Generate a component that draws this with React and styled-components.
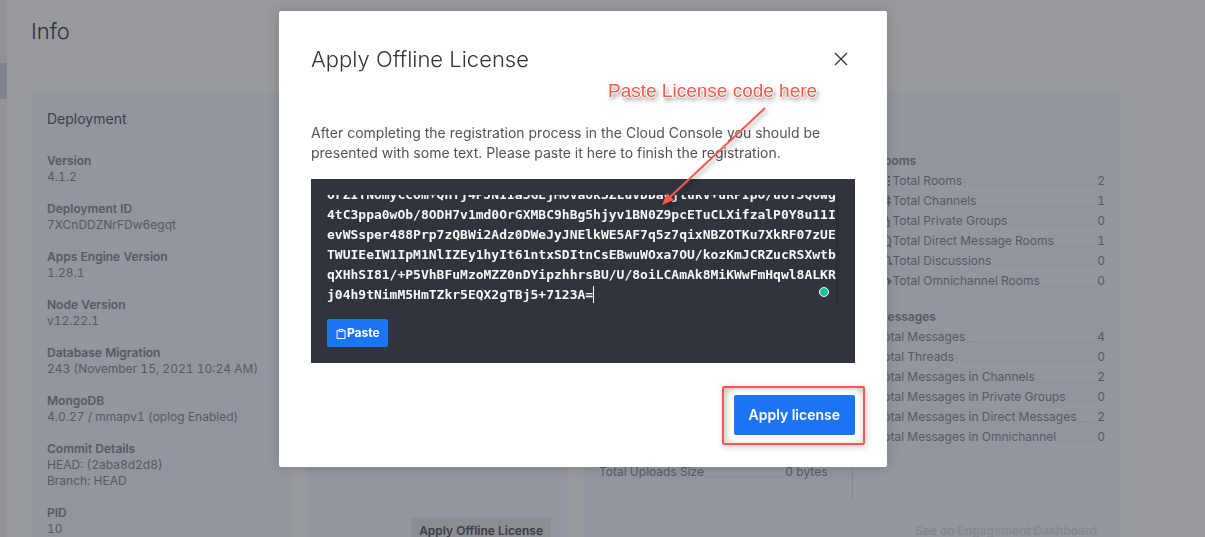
import React, { useLayoutEffect, useRef } from "react";
import styled, { createGlobalStyle } from "styled-components";

const GlobalStyle = createGlobalStyle`
  *, *::before, *::after { box-sizing: border-box; }
  body {
    margin: 0;
    overflow: hidden;
    background: #98999d;
    font-family: Inter, "Liberation Sans", sans-serif;
    color: #565a63;
  }
  h1, h2, h3, p, dl, dt, dd { margin: 0; font-weight: inherit; font-size: inherit; }
  button, textarea { font: inherit; border: 0; margin: 0; }
`;

const Page = styled.div`
  display: flex;
  height: 100vh;
  overflow: hidden;
`;

const Rail = styled.div`
  flex: 0 0 7px;
  padding-top: 63px;
  background: #929397;
`;

const RailThumb = styled.div`
  height: 36px;
  background: #7f838b;
`;

const Main = styled.main`
  flex: 1;
  padding: 16px 84px 0 24px;
`;

const PageTitle = styled.h1`
  font-size: 22px;
  line-height: 30px;
  font-weight: 300;
  color: #2c3039;
`;

const Cards = styled.div`
  display: grid;
  grid-template-columns: 260fr 260fr 538fr;
  gap: 16px;
  margin-top: 47px;
`;

const Card = styled.section`
  display: flex;
  flex-direction: column;
  min-height: 468px;
  padding: 16px;
  border-radius: 2px;
  background: #92969e;
`;

const CardTitle = styled.h2`
  margin-bottom: 24px;
  font-size: 14px;
  line-height: 20px;
  color: #3d4047;
`;

const CardFooter = styled.div`
  display: flex;
  justify-content: flex-end;
  margin-top: auto;
`;

const CardButton = styled.button`
  padding: 0 8px;
  border-radius: 2px;
  font-size: 12px;
  line-height: 28px;
  font-weight: 600;
  color: ${(p) => (p.$muted ? "#85888e" : "#3a3e48")};
  background: ${(p) => (p.$muted ? "transparent" : "#8b8d93")};
`;

const Facts = styled.dl`
  display: grid;
  gap: 16px;
  font-size: 12px;
  line-height: 16px;
  font-variant-numeric: tabular-nums;
  dt { font-weight: 600; }
`;

const UsageColumns = styled.div`
  display: grid;
  grid-template-columns: 1fr 1px 1fr;
  column-gap: 24px;
  min-height: 347px;
  margin-top: 44px;
`;

const Divider = styled.div`
  background: #85888f;
`;

const Column = styled.div`
  display: flex;
  flex-direction: column;
  gap: 20px;
`;

const StatList = styled.div`
  display: grid;
  gap: 4px;
  font-size: 12px;
  line-height: 16px;
  font-variant-numeric: tabular-nums;
  margin-top: ${(p) => (p.$atEnd ? "auto" : "0")};
  padding-bottom: ${(p) => (p.$atEnd ? "20px" : "0")};
`;

const StatHeading = styled.h3`
  font-weight: 600;
`;

const StatRow = styled.div`
  display: flex;
  align-items: center;
  svg { flex: none; }
`;

const Leader = styled.span`
  flex: 1;
  height: 12px;
  margin: 0 2px;
  border-bottom: 2px dotted #8b8e93;
`;

const Backdrop = styled.div`
  position: fixed;
  inset: 0;
  display: flex;
  justify-content: center;
  align-items: flex-start;
  padding: 11px 39px 0 0;
`;

const Modal = styled.div`
  position: relative;
  width: 608px;
  max-width: 100%;
  padding: 32px;
  border-radius: 2px;
  background: #fff;
  box-shadow: 0 0 12px rgba(47, 52, 61, 0.25);
`;

const ModalHeader = styled.header`
  display: flex;
  align-items: center;
  justify-content: space-between;
`;

const ModalTitle = styled.h2`
  font-size: 22px;
  line-height: 32px;
  font-weight: 300;
  color: #2f343d;
`;

const CloseButton = styled.button`
  display: grid;
  place-items: center;
  width: 28px;
  height: 28px;
  padding: 0;
  background: none;
  color: #2f343d;
`;

const ModalText = styled.p`
  margin: 48px 0 16px;
  font-size: 14px;
  line-height: 20px;
  color: #4e535d;
`;

const CodePanel = styled.div`
  padding: 16px;
  background: #2f343d;
`;

const CodeField = styled.div`
  position: relative;
  margin-bottom: 16px;
`;

const CodeInput = styled.textarea`
  display: block;
  width: 100%;
  height: 108px;
  padding: 0;
  border-right: 3px solid #2b2f38;
  outline: 0;
  resize: none;
  overflow: hidden;
  white-space: pre;
  background: transparent;
  color: #f7f8fa;
  font: bold 13px/20px Consolas, "DejaVu Sans Mono", monospace;
`;

const Caret = styled.span`
  position: absolute;
  left: 34ch;
  bottom: 0;
  width: 1px;
  height: 17px;
  background: #fff;
  font: bold 13px/20px Consolas, "DejaVu Sans Mono", monospace;
`;

const StatusDot = styled.span`
  position: absolute;
  right: 10px;
  bottom: 6px;
  width: 10px;
  height: 10px;
  border: 1px solid #fff;
  border-radius: 50%;
  background: #15c39a;
`;

const PasteButton = styled.button`
  display: flex;
  align-items: center;
  padding: 0 8px;
  border-radius: 2px;
  background: #1d74f5;
  color: #fff;
  font-size: 12px;
  line-height: 28px;
  font-weight: 700;
`;

const ModalFooter = styled.footer`
  display: flex;
  justify-content: flex-end;
  margin-top: 32px;
`;

const Highlighted = styled.div`
  position: relative;
`;

const HighlightFrame = styled.span`
  position: absolute;
  inset: -9px -10px -10px -12px;
  border: 2px solid #fb584a;
  border-radius: 2px;
  box-shadow: 1px 2px 6px rgba(0, 0, 0, 0.2), inset 2px 2px 8px rgba(0, 0, 0, 0.25);
  pointer-events: none;
`;

const PrimaryButton = styled.button`
  position: relative;
  display: block;
  padding: 0 15px;
  border-radius: 2px;
  background: #1d74f5;
  color: #fff;
  font-size: 14px;
  line-height: 40px;
  font-weight: 600;
  box-shadow: 0 0 4px 4px #fff;
`;

const Callout = styled.div`
  position: absolute;
  top: 68px;
  left: 329px;
  font: 19px/24px "Liberation Sans", Arial, sans-serif;
  white-space: nowrap;
  color: #fb584a;
  text-shadow: -1px 0 #fff, 1px 0 #fff, 0 -1px #fff, 0 1px #fff,
    2px 3px 4px rgba(0, 0, 0, 0.6);
`;

const CalloutArrow = styled.svg`
  position: absolute;
  top: 92px;
  left: 376px;
  overflow: visible;
  filter: drop-shadow(2px 3px 2px rgba(0, 0, 0, 0.3));
  pointer-events: none;
`;

const facts = [
  ["Version", "4.1.2"],
  ["Deployment ID", "7XCnDDZNrFDw6egqt"],
  ["Apps Engine Version", "1.28.1"],
  ["Node Version", "v12.22.1"],
  ["Database Migration", "243 (November 15, 2021 10:24 AM)"],
  ["MongoDB", "4.0.27 / mmapv1 (oplog Enabled)"],
  ["Commit Details", "HEAD: (2aba8d2d8)", "Branch: HEAD"],
  ["PID", "10"],
];

const icons = {
  rooms: (
    <path d="M2 4h7M2 8h7M2 12h7M11 4h2M11 8h2M11 12h2" strokeWidth="2" />
  ),
  hash: <path d="M6.5 2.5L5.5 13M11.5 2.5v10.500M2 5.500h12M2 9.500h12" strokeWidth="1.300" />,
  lock: <path d="M4 7.500h8v6H4zM6 7V4a2 2 0 0 1 4 0v3" strokeWidth="1.300" />,
  balloon: <path d="M13.500 13.500l-2-1a5.500 5.500 0 1 1 1-1z" strokeWidth="1.300" />,
  discussion: <path d="M8 3h2a2.500 2.500 0 0 1 2.500 3v3l2 2h-3M3 5h6v6H3z" strokeWidth="1.300" />,
  headset: <path d="M3 9V7a5 5 0 0 1 9 0M11.500 5.500l2.500 3-2.500 3z" fill="currentColor" />,
};

const rooms = [
  ["rooms", "Total Rooms", 2],
  ["hash", "Total Channels", 1],
  ["lock", "Total Private Groups", 0],
  ["balloon", "Total Direct Message Rooms", 1],
  ["discussion", "Total Discussions", 0],
  ["headset", "Total Omnichannel Rooms", 0],
];

const messages = [
  [null, "Total Messages", 4],
  [null, "Total Threads", 0],
  [null, "Total Messages in Channels", 2],
  [null, "Total Messages in Private Groups", 0],
  [null, "Total Messages in Direct Messages", 2],
  [null, "Total Messages in Omnichannel", 0],
];

const license = [
  "OrZIYNomyCcom+QHYj4PJNIIa3GEjMOva8k3ZLuvDDaCjtukV+uRPIpO/uoY3Q6wg",
  "4tC3ppa0wOb/8ODH7v1md0OrGXMBC9hBg5hjyv1BN0Z9pcETuCLXifzalP0Y8u11I",
  "evWSsper488Prp7zQBWi2Adz0DWeJyJNElkWE5AF7q5z7qixNBZOTKu7XkRF07zUE",
  "TWUIEeIW1IpM1NlIZEy1hyIt61ntxSDItnCsEBwuWOxa7OU/kozKmJCRZucRSXwtb",
  "qXHhSI81/+P5VhBFuMzoMZZ0nDYipzhhrsBU/U/8oiLCAmAk8MiKWwFmHqwl8ALKR",
  "j04h9tNimM5HmTZkr5EQX2gTBj5+7123A=",
].join("\n");

function Stat({ icon, label, value }) {
  return (
    <StatRow>
      {icon && (
        <svg width="16" height="16" viewBox="0 0 16 16" fill="none" stroke="currentColor" aria-hidden="true">
          {icons[icon]}
        </svg>
      )}
      <span>{label}</span>
      <Leader />
      <span>{value}</span>
    </StatRow>
  );
}

function StatGroup({ title, rows }) {
  return (
    <StatList>
      <StatHeading>{title}</StatHeading>
      {rows.map(([icon, label, value]) => (
        <Stat key={label} icon={icon} label={label} value={value} />
      ))}
    </StatList>
  );
}

function LicenseDialog() {
  const input = useRef(null);
  useLayoutEffect(() => {
    input.current.scrollTop = 10;
  }, []);
  return (
    <Backdrop>
      <Modal role="dialog" aria-modal="true" aria-labelledby="dialog-title">
        <ModalHeader>
          <ModalTitle id="dialog-title">Apply Offline License</ModalTitle>
          <CloseButton aria-label="Close">
            <svg width="14" height="14" viewBox="0 0 14 14" fill="none" stroke="currentColor" strokeWidth="1.3">
              <path d="M1 1l12 12M13 1L1 13" />
            </svg>
          </CloseButton>
        </ModalHeader>
        <ModalText>
          After completing the registration process in the Cloud Console you should be presented
          with some text. Please paste it here to finish the registration.
        </ModalText>
        <CodePanel>
          <CodeField>
            <CodeInput ref={input} aria-label="License code" defaultValue={license} spellCheck={false} />
            <Caret />
            <StatusDot />
          </CodeField>
          <PasteButton>
            <svg width="12" height="12" viewBox="0 0 12 12" fill="none" stroke="currentColor" aria-hidden="true">
              <path d="M3.500 3.500h-1.500v8h8v-8h-1.500M4 2.500h4v2h-4z" />
            </svg>
            Paste
          </PasteButton>
        </CodePanel>
        <ModalFooter>
          <Highlighted>
            <HighlightFrame />
            <PrimaryButton>Apply license</PrimaryButton>
          </Highlighted>
        </ModalFooter>
        <CalloutArrow width="120" height="110" viewBox="0 0 120 110" aria-hidden="true">
          <path d="M110 5L14 95" stroke="#fb584a" strokeWidth="2" />
          <path d="M7 102L12 90L19 97Z" fill="#fb584a" />
        </CalloutArrow>
        <Callout>Paste License code here</Callout>
      </Modal>
    </Backdrop>
  );
}

export default function App() {
  return (
    <>
      <GlobalStyle />
      <Page>
        <Rail>
          <RailThumb />
        </Rail>
        <Main>
          <PageTitle>Info</PageTitle>
          <Cards>
            <Card>
              <CardTitle>Deployment</CardTitle>
              <Facts>
                {facts.map(([term, ...lines]) => (
                  <div key={term}>
                    <dt>{term}</dt>
                    {lines.map((line) => (
                      <dd key={line}>{line}</dd>
                    ))}
                  </div>
                ))}
              </Facts>
            </Card>
            <Card>
              <CardFooter>
                <CardButton>Apply Offline License</CardButton>
              </CardFooter>
            </Card>
            <Card aria-label="Usage">
              <UsageColumns>
                <Column>
                  <StatList $atEnd>
                    <Stat label="Total Uploads Size" value="0 bytes" />
                  </StatList>
                </Column>
                <Divider />
                <Column>
                  <StatGroup title="Rooms" rows={rooms} />
                  <StatGroup title="Messages" rows={messages} />
                </Column>
              </UsageColumns>
              <CardFooter>
                <CardButton $muted>See on Engagement Dashboard</CardButton>
              </CardFooter>
            </Card>
          </Cards>
        </Main>
      </Page>
      <LicenseDialog />
    </>
  );
}
